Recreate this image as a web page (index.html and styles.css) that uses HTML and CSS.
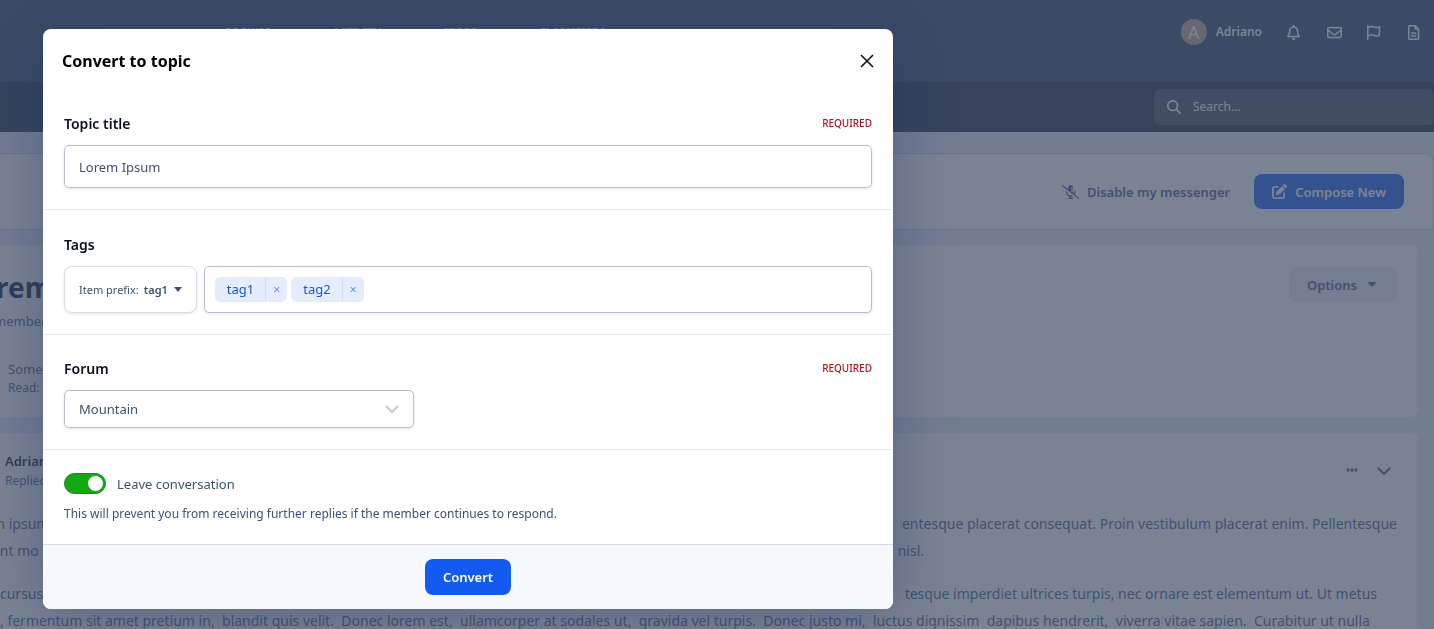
FILE: index.html
```html
<!DOCTYPE html>
<html lang="en">
<head>
<meta charset="utf-8">
<title>Convert to topic</title>
<link rel="stylesheet" href="styles.css">
</head>
<body>
<div class="page">
  <header class="masthead">
    <nav class="primary-nav">
      <a href="#">BROWSE</a><a href="#">ACTIVITY</a><a href="#">STORE</a><a href="#">CLASSIFIEDS</a>
    </nav>
    <div class="user-bar">
      <a class="user" href="#"><span class="avatar">A</span>Adriano</a>
      <button class="icon-button" aria-label="Notifications"><svg viewBox="0 0 448 512"><path d="M224 0c-17.7 0-32 14.3-32 32V51.2C119 66 64 130.6 64 208v25.4c0 45.4-15.5 89.5-43.8 124.9L5.3 377c-5.8 7.2-6.9 17.1-2.9 25.4S14.8 416 24 416H424c9.2 0 17.6-5.3 21.6-13.6s2.9-18.2-2.9-25.4l-14.9-18.6C399.5 322.9 384 278.8 384 233.4V208c0-77.4-55-142-128-156.8V32c0-17.7-14.3-32-32-32zm0 96c61.9 0 112 50.1 112 112v25.4c0 47.9 13.9 94.6 39.7 134.6H72.3C98.1 328 112 281.3 112 233.4V208c0-61.9 50.1-112 112-112zm64 352H224 160c0 17 6.700 33.300 18.700 45.300s28.300 18.700 45.300 18.700s33.300-6.700 45.300-18.700s18.700-28.300 18.700-45.300z"/></svg></button>
      <button class="icon-button" aria-label="Messages"><svg viewBox="0 0 512 512"><path d="M64 112c-8.8 0-16 7.2-16 16v22.1L220.5 291.7c20.7 17 50.4 17 71.1 0L464 150.1V128c0-8.8-7.2-16-16-16H64zM48 212.2V384c0 8.8 7.2 16 16 16H448c8.8 0 16-7.2 16-16V212.2L322 328.8c-38.4 31.5-93.7 31.5-132 0L48 212.2zM0 128C0 92.7 28.7 64 64 64H448c35.3 0 64 28.7 64 64V384c0 35.3-28.7 64-64 64H64c-35.3 0-64-28.7-64-64V128z"/></svg></button>
      <button class="icon-button" aria-label="Reports"><svg viewBox="0 0 448 512"><path d="M48 24C48 10.7 37.3 0 24 0S0 10.7 0 24V64 350.5 400v88c0 13.3 10.7 24 24 24s24-10.7 24-24V388l80.3-20.1c41.1-10.3 84.6-5.5 122.5 13.4c44.2 22.1 95.5 24.8 141.7 7.4l34.7-13c12.5-4.7 20.8-16.6 20.8-30V66.1c0-23-24.2-38-44.8-27.7l-9.6 4.8c-46.3 23.2-100.8 23.2-147.1 0c-35.1-17.6-75.4-22-113.5-12.5L48 52V24zm0 77.5l96.6-24.2c27-6.7 55.5-3.6 80.4 8.8c54.9 27.4 118.7 29.7 175 6.8V334.7l-24.4 9.1c-33.7 12.6-71.2 10.7-103.4-5.4c-48.2-24.1-103.3-30.1-155.6-17.1L48 338.5v-237z"/></svg></button>
      <button class="icon-button" aria-label="Pages"><svg viewBox="0 0 384 512"><path d="M64 464c-8.8 0-16-7.2-16-16V64c0-8.8 7.2-16 16-16H224v80c0 17.7 14.3 32 32 32h80V448c0 8.8-7.2 16-16 16H64zM64 0C28.7 0 0 28.7 0 64V448c0 35.3 28.7 64 64 64H320c35.3 0 64-28.7 64-64V154.5c0-17-6.7-33.3-18.7-45.3L274.7 18.7C262.7 6.7 246.5 0 229.5 0H64zm56 256c-13.3 0-24 10.7-24 24s10.7 24 24 24H264c13.3 0 24-10.7 24-24s-10.7-24-24-24H120zm0 96c-13.3 0-24 10.7-24 24s10.7 24 24 24H264c13.3 0 24-10.7 24-24s-10.7-24-24-24H120z"/></svg></button>
    </div>
  </header>
  <div class="search-bar">
    <label class="search">
      <svg viewBox="0 0 512 512"><path d="M416 208c0 45.9-14.9 88.3-40 122.7L502.6 457.4c12.5 12.5 12.5 32.8 0 45.3s-32.8 12.5-45.3 0L330.7 376c-34.4 25.2-76.8 40-122.7 40C93.1 416 0 322.9 0 208S93.1 0 208 0S416 93.1 416 208zM208 352a144 144 0 1 0 0-288 144 144 0 1 0 0 288z"/></svg>
      <input type="search" placeholder="Search..." aria-label="Search">
    </label>
  </div>
  <div class="toolbar">
    <button class="text-button"><svg viewBox="0 0 640 512"><path d="M38.8 5.1C28.4-3.1 13.3-1.2 5.1 9.2S-1.2 34.7 9.2 42.9l592 464c10.4 8.2 25.5 6.3 33.7-4.1s6.3-25.5-4.1-33.7L472.1 344.7c15.2-26 23.9-56.3 23.9-88.7V216c0-13.3-10.7-24-24-24s-24 10.7-24 24v40c0 21.2-5.1 41.1-14.2 58.7L416 300.8V256H358.9l-34.5-27c2.9-3.1 7-5 11.6-5h80V192H336c-8.8 0-16-7.2-16-16s7.2-16 16-16h80V128H336c-8.8 0-16-7.2-16-16s7.2-16 16-16h80c0-53-43-96-96-96s-96 43-96 96v54.3L38.8 5.1zm362.5 407l-43.1-33.9C346.1 382 333.3 384 320 384c-70.7 0-128-57.3-128-128v-8.7L144.7 210c-.5 1.9-.7 3.9-.7 6v40c0 89.1 66.2 162.7 152 174.4V464H248c-13.3 0-24 10.7-24 24s10.7 24 24 24h72 72c13.3 0 24-10.7 24-24s-10.7-24-24-24H344V430.4c20.4-2.8 39.7-9.1 57.3-18.2z"/></svg>Disable my messenger</button>
    <button class="compose"><svg viewBox="0 0 512 512"><path d="M471.6 21.7c-21.9-21.9-57.3-21.9-79.2 0L362.3 51.7l97.9 97.9 30.1-30.1c21.9-21.9 21.9-57.3 0-79.2L471.6 21.7zm-299.2 220c-6.1 6.1-10.8 13.6-13.5 21.9l-29.6 88.8c-2.9 8.6-.6 18.1 5.8 24.6s15.9 8.7 24.6 5.8l88.8-29.6c8.2-2.7 15.7-7.4 21.9-13.5L437.7 172.3 339.7 74.3 172.4 241.7zM96 64C43 64 0 107 0 160V416c0 53 43 96 96 96H352c53 0 96-43 96-96V320c0-17.7-14.3-32-32-32s-32 14.3-32 32v96c0 17.7-14.3 32-32 32H96c-17.7 0-32-14.3-32-32V160c0-17.7 14.3-32 32-32h96c17.7 0 32-14.3 32-32s-14.3-32-32-32H96z"/></svg>Compose New</button>
  </div>
  <section class="card summary">
    <div class="summary-text">
      <h1>rem</h1>
      <p class="members">member</p>
      <p class="person">Some<br><small>Read:</small></p>
    </div>
    <button class="options">Options <span class="caret"></span></button>
  </section>
  <article class="card post">
    <div class="post-head">
      <p class="author"><strong>Adriano</strong><small>Replied</small></p>
      <div class="post-tools">
        <button class="icon-button" aria-label="More"><svg viewBox="0 0 16 16"><circle cx="4" cy="7" r="1.7"/><circle cx="8" cy="7" r="1.7"/><circle cx="12" cy="7" r="1.7"/></svg></button>
        <button class="icon-button" aria-label="Collapse"><svg class="line" viewBox="0 0 16 16"><path d="M2.500 5.500L8 11l5.500-5.500"/></svg></button>
      </div>
    </div>
    <div class="prose">
      <p class="cut"><span>m ipsum</span><span>entesque placerat consequat. Proin vestibulum placerat enim. Pellentesque</span></p>
      <p class="cut"><span>ant mo</span><span class="end-short">nisl.</span></p>
    </div>
    <div class="prose">
      <p><span>cursus</span><span class="end-mid">tesque imperdiet ultrices turpis, nec ornare est elementum ut. Ut metus</span></p>
      <p class="end-long"><span>, fermentum sit amet pretium in,</span><span>blandit quis velit.</span><span>Donec lorem est,</span><span>ullamcorper at sodales ut,</span><span>gravida vel turpis.</span><span>Donec justo mi,</span><span>luctus dignissim</span><span>dapibus hendrerit,</span><span>viverra vitae sapien.</span><span>Curabitur ut nulla</span></p>
    </div>
  </article>
</div>

<div class="overlay">
  <form class="modal" role="dialog" aria-labelledby="dialog-title">
    <header class="modal-head">
      <h2 id="dialog-title">Convert to topic</h2>
      <button type="button" class="close" aria-label="Close"><svg viewBox="0 0 14 14"><path d="M1 1l12 12M13 1L1 13"/></svg></button>
    </header>
    <section class="field">
      <div class="field-head"><label for="topic">Topic title</label><span class="required">REQUIRED</span></div>
      <input id="topic" class="box title-input" type="text" value="Lorem Ipsum">
    </section>
    <section class="field">
      <div class="field-head"><label for="tags">Tags</label></div>
      <div class="tag-row">
        <button type="button" class="prefix">Item prefix: <strong>tag1</strong><span class="caret"></span></button>
        <div class="box tag-box">
          <span class="tag"><span>tag1</span><button type="button" aria-label="Remove tag1">×</button></span>
          <span class="tag"><span>tag2</span><button type="button" aria-label="Remove tag2">×</button></span>
          <input id="tags" type="text">
        </div>
      </div>
    </section>
    <section class="field compact">
      <div class="field-head"><label for="forum">Forum</label><span class="required">REQUIRED</span></div>
      <div class="select-wrap">
        <select id="forum" class="box"><option>Mountain</option></select>
        <svg viewBox="0 0 14 14"><path d="M1 4l6 6 6-6"/></svg>
      </div>
    </section>
    <section class="field leave">
      <label class="switch"><input type="checkbox" checked>Leave conversation</label>
      <p>This will prevent you from receiving further replies if the member continues to respond.</p>
    </section>
    <footer class="modal-foot"><button type="submit" class="submit">Convert</button></footer>
  </form>
</div>
</body>
</html>
```
FILE: styles.css
```css
* { box-sizing: border-box; margin: 0; }
body { font-family: "Noto Sans", "Open Sans", sans-serif; font-size: 13px; line-height: 20px; overflow: hidden; }
button, input, select { font: inherit; color: inherit; }
button { border: 0; background: none; padding: 0; }
a { color: inherit; text-decoration: none; }
svg { display: block; fill: currentColor; height: 16px; }

/* Page behind the dialog */
.page { height: 100vh; overflow: hidden; background: #e2e9f6; color: #445a84; }
.masthead { display: flex; justify-content: space-between; align-items: flex-start; height: 82px; padding: 19px 12px 0 225px; background: #2d4061; color: #fff; }
.primary-nav { display: flex; padding-top: 3px; font-size: 11px; font-weight: 600; gap: 62px; }
.user-bar { display: flex; align-items: center; gap: 24px; font-weight: 600; }
.user { display: flex; align-items: center; gap: 9px; font-size: 12px; }
.avatar { width: 26px; height: 26px; border-radius: 50%; background: #c0a080; font-size: 18px; font-weight: 400; line-height: 26px; text-align: center; }
.icon-button { width: 16px; display: flex; justify-content: center; }
.user-bar svg { height: 15px; stroke: currentColor; stroke-width: 8; }
.search-bar { display: flex; justify-content: flex-end; padding: 7px 0; background: #1b2a42; color: #fff; }
.search { display: flex; align-items: center; gap: 12px; width: 280px; height: 36px; padding: 0 13px; border-radius: 6px; background: #3c4a5c; }
.search svg { height: 14px; }
.search input { border: 0; background: none; flex: 1; min-width: 0; padding: 0; font-size: 12px; outline: 0; }
.search input::placeholder { color: #fff; }
.toolbar { display: flex; justify-content: flex-end; align-items: center; gap: 24px; margin: 21px 0 15px; padding: 20px 29px; background: #fff; border: 1px solid #c6d0e6; border-left: 0; border-radius: 0 8px 0 0; font-weight: 600; }
.text-button, .compose { display: flex; align-items: center; gap: 8px; }
.text-button svg { height: 14px; }
.compose svg { height: 15px; }
.compose { height: 35px; padding: 0 18px; border-radius: 8px; background: #165cf0; color: #fff; }
.card { background: #fff; margin-right: 16px; border-radius: 0 8px 8px 0; }
.summary { display: flex; justify-content: space-between; align-items: flex-start; height: 172px; margin-bottom: 16px; padding: 22px 21px 0 0; }
.summary-text { white-space: nowrap; }
.summary h1 { margin-left: -4px; font-size: 28px; line-height: 40px; color: #0a1830; }
.members { margin: 4px 0 0 -6px; }
.person { margin: 29px 0 0 8px; line-height: 18px; }
small { font-size: 12px; }
.options { display: flex; align-items: center; gap: 10px; height: 35px; padding: 0 20px 0 18px; border-radius: 8px; background: #e9eef7; font-weight: 600; }
.caret { border: 5px solid transparent; border-top-color: currentColor; border-bottom: 0; }
.post { padding-top: 18px; min-height: 260px; }
.post-head { display: flex; justify-content: space-between; align-items: center; padding: 0 26px 0 5px; }
.author strong, .author small { display: block; }
.author strong { font-weight: 600; color: #0a1830; }
.post-tools { display: flex; gap: 16px; }
.line { fill: none; stroke: currentColor; stroke-width: 2; stroke-linecap: round; stroke-linejoin: round; }
.prose { margin: 0 21px 16px 0; font-size: 14px; line-height: 27px; }
.post-head + .prose { margin-top: 19px; }
.prose p { display: flex; justify-content: space-between; white-space: nowrap; }
.prose .cut { margin-left: -8px; }
.prose .end-short { padding-right: 473px; }
.prose .end-mid { padding-right: 20px; }
.prose .end-long { padding-right: 27px; }

/* Dialog */
.overlay { position: fixed; inset: 0; padding: 29px 43px; background: rgba(65, 79, 103, .7); }
.modal { max-width: 850px; background: #fff; border-radius: 8px; overflow: hidden; box-shadow: 0 5px 60px rgba(30, 50, 100, .4); color: #3d5170; }
.modal-head { display: flex; justify-content: space-between; padding: 20px 19px 16px; color: #000; }
.modal-head h2 { font-size: 16px; line-height: 24px; }
.close { width: 14px; color: #0a1020; }
.close svg { width: 14px; height: 14px; fill: none; stroke: currentColor; stroke-width: 1.6; }
.field { padding: 24px 21px 21px; border-bottom: 1px solid #e8e9ec; }
.compact { padding-top: 23px; }
.field-head { display: flex; justify-content: space-between; align-items: flex-start; margin-bottom: 10px; line-height: 22px; }
.field-head label { font-size: 14px; font-weight: 600; color: #0a1020; }
.required { font-size: 10px; font-weight: 500; line-height: 20px; color: #b01020; }
.box { border: 1px solid #b9bfcc; border-radius: 5px; background: #fff; box-shadow: 0 1px 3px rgba(30, 50, 100, .12); }
.title-input { display: block; width: 100%; height: 43px; padding: 0 14px; }
.tag-row { display: flex; gap: 7px; height: 47px; }
.prefix { display: flex; align-items: center; padding: 0 14px; border: 1px solid #dadce3; border-radius: 8px; box-shadow: 0 1px 3px rgba(30, 50, 100, .12); font-size: 11px; }
.prefix strong { margin: 0 6px 0 5px; font-weight: 600; }
.prefix .caret { border-width: 5px 4px 0; }
.tag-box { display: flex; align-items: center; flex: 1; min-width: 0; gap: 4px; padding: 0 10px; }
.tag { display: flex; height: 25px; border-radius: 5px; background: #e5edfd; color: #1257e8; line-height: 25px; }
.tag span { padding: 0 11px 0 12px; }
.tag button { width: 22px; border-left: 1px solid #d3dff8; color: #6a90e8; }
.tag-box input { flex: 1; min-width: 0; border: 0; outline: 0; }
.select-wrap { display: grid; align-items: center; width: 350px; max-width: 100%; }
.select-wrap > * { grid-area: 1 / 1; }
.select-wrap select { appearance: none; width: 100%; height: 38px; padding: 0 14px; }
.select-wrap svg { justify-self: end; width: 14px; height: 14px; margin-right: 15px; fill: none; stroke: #c0c5d0; stroke-width: 1.8; pointer-events: none; }
.leave { padding: 23px 21px 20px; border-bottom-color: #d3daea; }
.switch { display: flex; align-items: center; gap: 11px; height: 21px; }
.switch input { appearance: none; display: flex; justify-content: flex-end; width: 42px; height: 21px; margin: 0; padding: 2px; border: 1px solid #118a1c; border-radius: 11px; background: #14a814; }
.switch input::after { content: ""; width: 15px; height: 15px; border-radius: 50%; background: #fff; }
.leave p { margin-top: 10px; font-size: 12px; }
.modal-foot { display: flex; justify-content: center; padding: 14px; background: #f6f8fd; }
.submit { height: 36px; padding: 0 18px; border-radius: 8px; background: #135af0; color: #fff; font-weight: 600; }
```
